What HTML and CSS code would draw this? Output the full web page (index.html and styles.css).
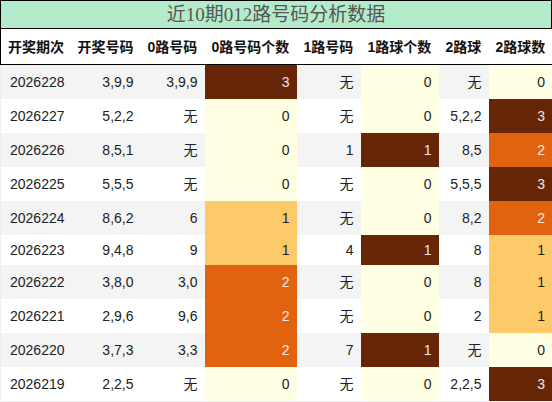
FILE: index.html
```html
<!DOCTYPE html>
<html>
<head>
<meta charset="utf-8">
<link rel="stylesheet" href="styles.css">
</head>
<body>
<div class="title">近10期012路号码分析数据</div>
<table class="grid">
<colgroup>
<col class="c1"><col class="c2"><col class="c3"><col class="c4"><col class="c5"><col class="c6"><col class="c7"><col class="c8">
</colgroup>
<thead>
<tr><th>开奖期次</th><th>开奖号码</th><th>0路号码</th><th>0路号码个数</th><th>1路号码</th><th>1路球个数</th><th>2路球</th><th>2路球数</th></tr>
</thead>
<tbody>
<tr class="odd tall"><td class="first">2026228</td><td>3,9,9</td><td>3,9,9</td><td class="h3">3</td><td>无</td><td class="h0">0</td><td>无</td><td class="h0">0</td></tr>
<tr class="tall"><td class="first">2026227</td><td>5,2,2</td><td>无</td><td class="h0">0</td><td>无</td><td class="h0">0</td><td>5,2,2</td><td class="h3">3</td></tr>
<tr class="odd tall"><td class="first">2026226</td><td>8,5,1</td><td>无</td><td class="h0">0</td><td>1</td><td class="h3">1</td><td>8,5</td><td class="h2">2</td></tr>
<tr class="tall"><td class="first">2026225</td><td>5,5,5</td><td>无</td><td class="h0">0</td><td>无</td><td class="h0">0</td><td>5,5,5</td><td class="h3">3</td></tr>
<tr class="odd tall"><td class="first">2026224</td><td>8,6,2</td><td>6</td><td class="h1">1</td><td>无</td><td class="h0">0</td><td>8,2</td><td class="h2">2</td></tr>
<tr class="short"><td class="first">2026223</td><td>9,4,8</td><td>9</td><td class="h1">1</td><td>4</td><td class="h3">1</td><td>8</td><td class="h1">1</td></tr>
<tr class="odd tall"><td class="first">2026222</td><td>3,8,0</td><td>3,0</td><td class="h2">2</td><td>无</td><td class="h0">0</td><td>8</td><td class="h1">1</td></tr>
<tr class="tall"><td class="first">2026221</td><td>2,9,6</td><td>9,6</td><td class="h2">2</td><td>无</td><td class="h0">0</td><td>2</td><td class="h1">1</td></tr>
<tr class="odd tall"><td class="first">2026220</td><td>3,7,3</td><td>3,3</td><td class="h2">2</td><td>7</td><td class="h3">1</td><td>无</td><td class="h0">0</td></tr>
<tr class="tall"><td class="first">2026219</td><td>2,2,5</td><td>无</td><td class="h0">0</td><td>无</td><td class="h0">0</td><td>2,2,5</td><td class="h3">3</td></tr>
</tbody>
</table>
</body>
</html>
```
FILE: styles.css
```css
html, body {
  margin: 0;
  padding: 0;
  background: #fff;
}
body {
  font-family: "Liberation Sans", "Noto Sans CJK SC", sans-serif;
  width: 552px;
}
.title {
  height: 27px;
  line-height: 27px;
  border: 1px solid #000;
  background: #b3ebcb;
  text-align: center;
  font-family: "Liberation Serif", "Noto Sans CJK SC", serif;
  font-size: 19px;
  color: #555;
}
.grid {
  width: 552px;
  border-collapse: collapse;
  table-layout: fixed;
  font-size: 14px;
}
.c1 { width: 70px; }
.c2 { width: 70px; }
.c3 { width: 64px; }
.c4 { width: 92px; }
.c5 { width: 64px; }
.c6 { width: 78px; }
.c7 { width: 50px; }
.c8 { width: 64px; }
.grid th {
  height: 34px;
  padding: 1px 0 0 7px;
  text-align: left;
  font-weight: bold;
  color: #111;
  line-height: 16px;
  border-bottom: 1px solid #000;
  white-space: nowrap;
}
.grid th:first-child { border-left: 1px solid #000; }
.grid th:last-child { border-right: 1px solid #000; }
.grid td {
  padding: 9px 7px;
  line-height: 16px;
  text-align: right;
  color: #222;
  white-space: nowrap;
}
.grid tr.short td {
  padding-top: 7px;
  padding-bottom: 7px;
}
.grid td.first {
  text-align: left;
  padding-left: 9px;
  border-left: 1px solid #eee;
}
.grid td:last-child { border-right: 1px solid #eee; }
.grid tbody tr:last-child td { border-bottom: 1px solid #eee; }
.grid tr.odd { background: #f4f4f4; }
.grid td.h0 { background: #ffffe3; color: #222; }
.grid td.h1 { background: #fdca69; color: #222; }
.grid td.h2 { background: #e1630f; color: #f4ece6; }
.grid td.h3 { background: #662507; color: #f0e6e0; }
```
